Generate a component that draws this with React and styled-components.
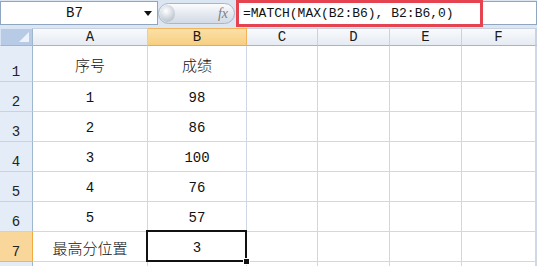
import React from "react";
import styled, { createGlobalStyle } from "styled-components";

const GlobalStyle = createGlobalStyle`
  body {
    margin: 0;
    background: #ffffff;
    font-family: "Liberation Mono", "Noto Sans CJK SC", monospace;
  }
`;

const Page = styled.div`
  width: 537px;
  height: 266px;
  overflow: hidden;
  background: #ffffff;
`;

const FormulaBar = styled.div`
  display: flex;
  align-items: flex-start;
  height: 28px;
  background: #dce6f2;
`;

const NameBox = styled.div`
  box-sizing: border-box;
  display: flex;
  align-items: center;
  width: 158px;
  height: 24px;
  margin-top: 1px;
  background: #ffffff;
  border: 1px solid #8fa6c2;
  font-size: 14px;
  color: #111;
`;

const NameText = styled.span`
  flex: 1;
  text-align: center;
  padding-left: 4px;
`;

const DropArrow = styled.span`
  width: 0;
  height: 0;
  margin-right: 5px;
  border-left: 4px solid transparent;
  border-right: 4px solid transparent;
  border-top: 5px solid #111;
`;

const FxPill = styled.div`
  box-sizing: border-box;
  position: relative;
  display: flex;
  align-items: center;
  justify-content: flex-end;
  width: 77px;
  height: 21px;
  margin-top: 3px;
  padding-right: 6px;
  border: 1px solid #a9b6c6;
  border-radius: 11px;
  background: linear-gradient(#fbfcfd, #e3e8ef 55%, #d3dbe5);
`;

const Knob = styled.span`
  position: absolute;
  left: 1px;
  top: 1px;
  width: 15px;
  height: 17px;
  border-radius: 50%;
  background: radial-gradient(circle at 40% 35%, #ffffff 0, #dfe4ea 35%, #a7b0bb 100%);
`;

const FxLabel = styled.span`
  font-family: "Liberation Serif", serif;
  font-style: italic;
  font-size: 14px;
  color: #7a7f86;
`;

const FormulaField = styled.div`
  box-sizing: border-box;
  display: flex;
  align-items: center;
  width: 247px;
  height: 27px;
  margin-left: 1px;
  padding-left: 4px;
  border: 3px solid #e5434f;
  background: #ffffff;
  font-size: 13px;
  color: #111;
  white-space: nowrap;
`;

const FormulaRest = styled.div`
  box-sizing: border-box;
  flex: 1;
  height: 24px;
  margin-top: 1px;
  background: #ffffff;
  border: 1px solid #8fa6c2;
  border-left: none;
`;

const Sheet = styled.div`
  display: grid;
  grid-template-columns: 33px 115px 99px 71px 72px 72px 74px 1fr;
  grid-template-rows: 18px 36px repeat(7, 30px);
`;

const Corner = styled.div`
  box-sizing: border-box;
  position: relative;
  background: #b7cbe6;
  border: 1px solid #d8e4f3;
  border-right-color: #9eb6ce;
  border-bottom-color: #9eb6ce;

  &::after {
    content: "";
    position: absolute;
    right: 3px;
    bottom: 3px;
    border-left: 10px solid transparent;
    border-bottom: 10px solid #eef3fa;
  }
`;

const ColHead = styled.div`
  box-sizing: border-box;
  display: flex;
  align-items: center;
  justify-content: center;
  font-size: 14px;
  color: #1a1a1a;
  border-top: 1px solid ${(p) => (p.$active ? "#f2b45a" : "#c9d3df")};
  border-right: 1px solid ${(p) => (p.$active ? "#f2b45a" : "#c9d3df")};
  border-bottom: 1px solid ${(p) => (p.$active ? "#f2a93f" : "#9eb6ce")};
  background: ${(p) =>
    p.$active
      ? "linear-gradient(#fbe0a8, #f7cf82)"
      : "linear-gradient(#f8fafd, #e6ebf2)"};
`;

const RowHead = styled.div`
  box-sizing: border-box;
  display: flex;
  align-items: flex-end;
  justify-content: center;
  padding-bottom: 1px;
  font-size: 14px;
  color: #222;
  border-right: 1px solid ${(p) => (p.$active ? "#f2a93f" : "#9eb6ce")};
  border-bottom: 1px solid ${(p) => (p.$active ? "#f2b45a" : "#c5d3e3")};
  background: ${(p) => (p.$active ? "#f9d79b" : "#e4ecf7")};
`;

const Cell = styled.div`
  box-sizing: border-box;
  position: relative;
  display: flex;
  align-items: center;
  justify-content: center;
  padding-top: 2px;
  font-size: 14px;
  color: #111;
  border-right: 1px solid #d0d7e5;
  border-bottom: 1px solid #d0d7e5;

  ${(p) =>
    p.$selected &&
    `
    &::after {
      content: "";
      position: absolute;
      left: -2px;
      top: -2px;
      right: -1px;
      bottom: -1px;
      border: 2px solid #111;
    }
    &::before {
      content: "";
      position: absolute;
      right: -4px;
      bottom: -4px;
      width: 5px;
      height: 5px;
      background: #111;
      border: 1px solid #fff;
      z-index: 1;
    }
  `}
`;

const Label = styled.span`
  font-family: "Noto Sans CJK SC", sans-serif;
  font-size: 15px;
  font-weight: 300;
`;

const columns = ["A", "B", "C", "D", "E", "F", ""];

const rows = [
  { n: "1", a: <Label>序号</Label>, b: <Label>成绩</Label> },
  { n: "2", a: "1", b: "98" },
  { n: "3", a: "2", b: "86" },
  { n: "4", a: "3", b: "100" },
  { n: "5", a: "4", b: "76" },
  { n: "6", a: "5", b: "57" },
  { n: "7", a: <Label>最高分位置</Label>, b: "3", active: true },
  { n: "", a: "", b: "" },
];

const App = () => {
  return (
    <Page>
      <GlobalStyle />
      <FormulaBar>
        <NameBox>
          <NameText>B7</NameText>
          <DropArrow />
        </NameBox>
        <FxPill>
          <Knob />
          <FxLabel>fx</FxLabel>
        </FxPill>
        <FormulaField>=MATCH(MAX(B2:B6), B2:B6,0)</FormulaField>
        <FormulaRest />
      </FormulaBar>

      <Sheet>
        <Corner />
        {columns.map((c, i) => (
          <ColHead key={i} $active={c === "B"}>
            {c}
          </ColHead>
        ))}

        {rows.map((r, i) => (
          <React.Fragment key={i}>
            <RowHead $active={r.active}>{r.n}</RowHead>
            <Cell>{r.a}</Cell>
            <Cell $selected={r.active}>{r.b}</Cell>
            <Cell />
            <Cell />
            <Cell />
            <Cell />
            <Cell />
          </React.Fragment>
        ))}
      </Sheet>
    </Page>
  );
};

export default App;
